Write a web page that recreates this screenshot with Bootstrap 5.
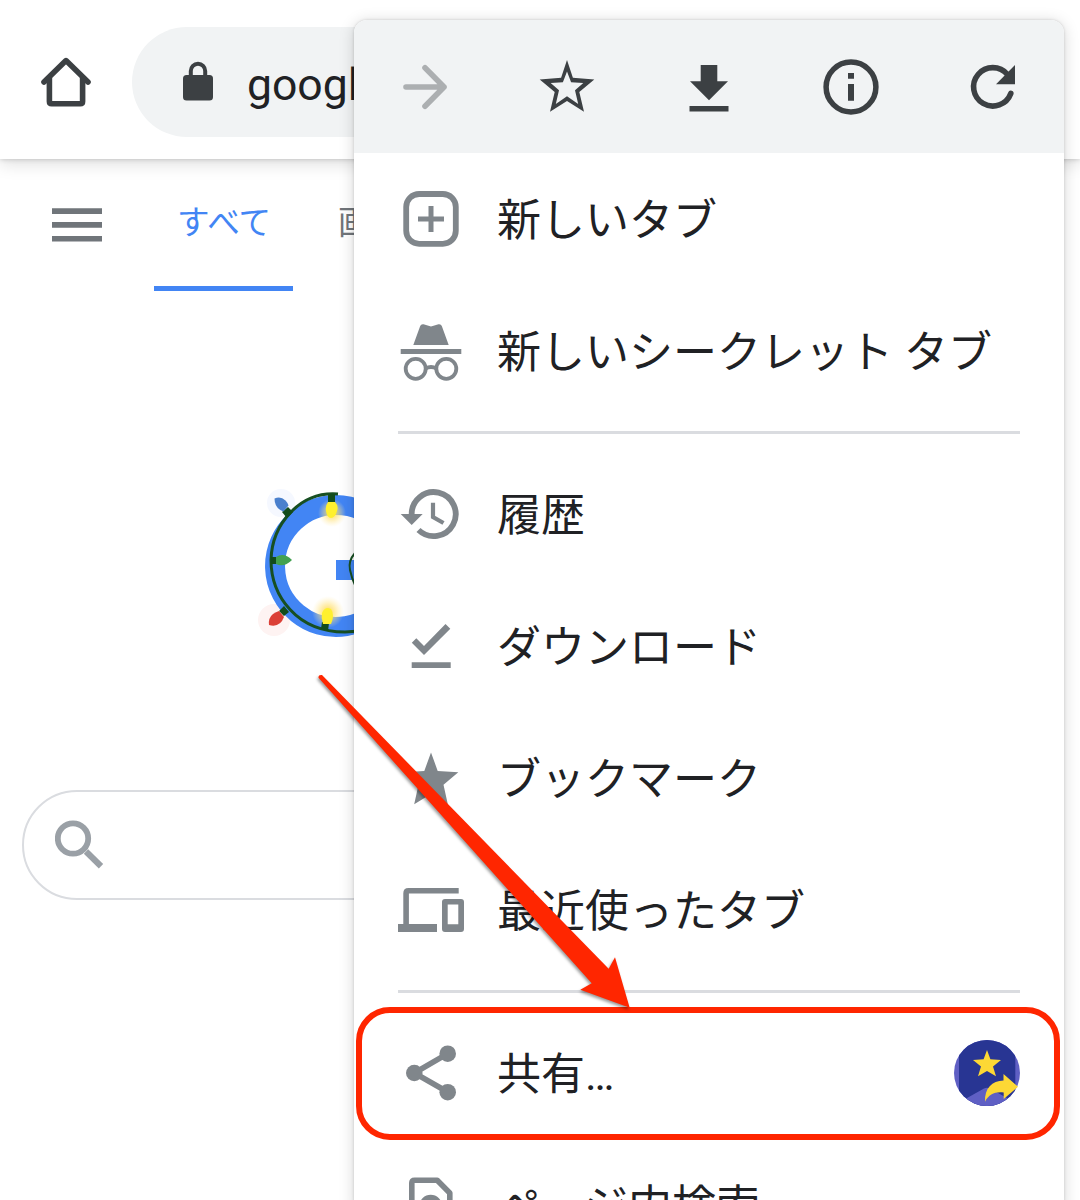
<!DOCTYPE html>
<html lang="ja">
<head>
<meta charset="utf-8">
<meta name="viewport" content="width=device-width, initial-scale=1">
<title>Google</title>
<link rel="stylesheet" href="https://cdn.jsdelivr.net/npm/bootstrap@5.3.0/dist/css/bootstrap.min.css">
<style>
  body { font-family: Roboto, "Noto Sans CJK JP", sans-serif; color: #202124; background: #fff; }
  .phone { width: 1080px; height: 1200px; }
  .toolbar { height: 159px; padding: 27px 41px 22px; box-shadow: 0 0 5px rgba(0,0,0,.2), 0 5px 16px rgba(0,0,0,.13); background: #fff; z-index: 1; }
  .home-ico { margin-top: 30px; width: 50px; height: 50px; }
  .omnibox { margin-left: 41px; width: 760px; height: 110px; padding-left: 49px; padding-bottom: 2px; background: #f1f3f4; font-size: 44.5px; line-height: 1; }
  .omnibox span { margin-left: 32px; padding-top: 8px; }
  .g-tabs { height: 132px; padding-left: 52px; }
  .g-tabs .burger { margin: 49px 52px 0 0; }
  .g-tab { font-size: 32.6px; line-height: 46px; padding: 41px 18px 0 23px; color: #70757a; border-bottom: 5px solid transparent; margin-right: 22px; }
  .g-tab.on { color: #4285f4; border-color: #4285f4; width: 139px; }
  .doodle { margin: 189px 0 0 250px; width: 180px; height: 170px; }
  .searchbox { margin: 140px 22px 0; height: 110px; border: 2px solid #dadce0; padding-left: 31px; padding-bottom: 1px; }
  .menu { left: 354px; top: 20px; width: 710px; height: 1190px; border-radius: 13px 13px 0 0; box-shadow: 0 0 3px rgba(0,0,0,.16), 0 2px 15px rgba(0,0,0,.17); z-index: 3; }
  .menu-top { height: 133px; background: #f1f3f4; color: #3c4043; border-radius: 13px 13px 0 0; }
  .entry { height: 132px; padding: 0 44px; font-size: 44px; line-height: 64px; gap: 33px; }
  .entry span { padding-top: 4px; }
  .entry svg { color: #80868b; flex: none; }
  .rule { height: 3px; margin: 14px 44px; background: #dadce0; }
  .frame { left: 356px; top: 1007px; width: 704px; height: 133px; border: 6px solid #ff2600; border-radius: 34px; z-index: 4; }
  .pointer { left: 300px; top: 660px; z-index: 5; filter: drop-shadow(-1px 2px 1.5px rgba(0,0,0,.4)); }
</style>
<script src="https://cdn.jsdelivr.net/npm/bootstrap@5.3.0/dist/js/bootstrap.bundle.min.js"></script>
</head>
<body>
<div class="phone position-relative overflow-hidden">
  <header class="toolbar d-flex position-relative">
    <svg class="home-ico" viewBox="0 0 50 50" fill="none" stroke="#3c4043" stroke-width="5.6" stroke-linejoin="round" stroke-linecap="round"><path d="M3 25 25 3.6 47 25"/><path d="M8.4 20.5V44.6Q8.4 46.8 10.6 46.8H39.4Q41.6 46.8 41.6 44.6V20.5" stroke-linecap="butt"/></svg>
    <div class="omnibox rounded-pill d-flex align-items-center">
      <svg width="34" height="42" viewBox="0 0 34 42"><path d="M9.8 18V11a7.2 7.2 0 0 1 14.4 0V18" fill="none" stroke="#3c4043" stroke-width="4"/><rect x="2" y="15" width="30" height="25.5" rx="3.5" fill="#3c4043"/></svg>
      <span>google.com</span>
    </div>
  </header>
  <main>
    <nav class="g-tabs d-flex">
      <svg class="burger" width="50" height="34" viewBox="0 0 50 34" fill="#70757a"><path d="M0 .3h50v5.6H0zM0 14.1h50v5.6H0zM0 28h50v5.6H0z"/></svg>
      <div class="g-tab on text-nowrap">すべて</div>
      <div class="g-tab text-nowrap">画像</div>
    </nav>
    <svg class="doodle d-block" viewBox="250 480 180 170">
      <defs><radialGradient id="glow"><stop offset="0" stop-color="#ffd84a"/><stop offset=".5" stop-color="#ffe27a" stop-opacity=".55"/><stop offset="1" stop-color="#ffecb0" stop-opacity="0"/></radialGradient></defs>
      <circle cx="281" cy="503" r="14" fill="#f5f8ff"/><circle cx="274" cy="620" r="16" fill="#fef3f2"/>
      <path d="M386 531A61 61 0 1 0 388 598L397 570H336" fill="none" stroke="#4285f4" stroke-width="20"/>
      <circle cx="332" cy="513" r="14" fill="url(#glow)"/><circle cx="328" cy="612" r="16" fill="url(#glow)"/>
      <path d="M338 494C300 491 272 524 271 560C271 596 297 632 345 632L360 631" fill="none" stroke="#174f22" stroke-width="3"/>
      <path d="M355 553Q348 561 350 570T355 585" fill="none" stroke="#174f22" stroke-width="2"/>
      <g fill="#124c1c"><path d="M328 494h7v9h-7zM271 557h7v7h-7zM288 507l5 5-6 6-5-6zM284 606l5 6-5 4-5-5zM322 622l7 1-1 8-7-2z"/></g>
      <path d="M328 502h7q4 4 2 9-2 7-6 7-4 0-5-7-1-5 2-9z" fill="#fff02e"/>
      <path d="M323 624h8q4-9 0-15l-3-1q-4 0-6 5-1 5 1 11z" fill="#fff02e"/>
      <path d="M276 557q8-5 16 3-8 8-16 4z" fill="#43a150"/>
      <path d="M274.500 498.500q6-3 11 2 2 2 3 5l-5 6q-9-3-9-13z" fill="#4a80cd"/>
      <path d="M269 625q-1-7 4-11 3-2 6-3l5 6q-4 11-15 8z" fill="#db4037"/>
    </svg>
    <div class="searchbox rounded-pill d-flex align-items-center">
      <svg width="50" height="50" viewBox="0 0 50 50" fill="none" stroke="#9aa0a6"><circle cx="18" cy="18.5" r="15.2" stroke-width="5.8"/><path d="M31 31.500 46 46.300" stroke-width="6.2"/></svg>
    </div>
  </main>

  <aside class="menu position-absolute bg-white overflow-visible">
    <div class="menu-top d-flex align-items-center">
      <div class="flex-fill text-center"><svg width="66" height="66" fill="none" stroke="#acafb1" stroke-width="5.6" stroke-linecap="round" stroke-linejoin="round"><path d="M14 33H52M33 13.8 52 33 33 52.2"/></svg></div>
      <div class="flex-fill text-center"><svg width="66" height="66" fill="currentColor" fill-rule="evenodd"><path d="M33 6 38.9 23.8 60.3 25.6 45.3 38 50 57.8 33 47 16 57.8 20.7 38 5.7 25.6 27.1 23.8zM33 17.5 28.9 28.3 16.7 28.9 25 36.2 21.8 50 33 42.2 44.2 50 41 36.2 49.3 28.9 37.1 28.3z"/></svg></div>
      <div class="flex-fill text-center"><svg width="66" height="66" fill="currentColor"><path d="M24.7 11H41.3V27.3H52L33 46.3 14 27.3H24.7zM13.5 52h39v5.6h-39z"/></svg></div>
      <div class="flex-fill text-center"><svg width="66" height="66" fill="currentColor"><circle cx="33" cy="33" r="24.9" fill="none" stroke="currentColor" stroke-width="5.5"/><path d="M30 19h6v5.7h-6zM30 30h6v16.7h-6z"/></svg></div>
      <div class="flex-fill text-center"><svg width="66" height="66" fill="currentColor"><path d="M50.8 39.5A19.2 19.2 0 1 1 47.5 20.5" fill="none" stroke="currentColor" stroke-width="5.6" stroke-linecap="round"/><path d="M55 11V30.3H36z"/></svg></div>
    </div>
    <div class="entry d-flex align-items-center"><svg width="66" height="66" fill="none" stroke="currentColor"><rect x="8.2" y="8" width="49.6" height="49.8" rx="13" stroke-width="5.8"/><path d="M20 33H46M33 20V46" stroke-width="5"/></svg><span>新しいタブ</span></div>
    <div class="entry d-flex align-items-center"><svg width="66" height="66" fill="currentColor"><path d="M15.3 27 22.2 8Q23 5.8 25.5 6.2L33 8.5 40.5 6.2Q43 5.8 43.8 8L50.7 27zM2.7 31h60.6v5H2.7z"/><g fill="none" stroke="currentColor" stroke-width="3.8"><circle cx="17.7" cy="50.8" r="10"/><circle cx="48.3" cy="50.8" r="10"/><path d="M27.5 50.5Q33 47.5 38.5 50.5"/></g></svg><span>新しいシークレット タブ</span></div>
    <div class="rule"></div>
    <div class="entry d-flex align-items-center"><svg width="66" height="66" fill="none" stroke="currentColor"><path d="M13.7 34A22 22 0 1 1 20.5 49" stroke-width="5.8"/><path d="M35 21.7V36L45.5 42" stroke-width="4.2"/><path d="M2.7 33h22l-11 11z" fill="currentColor" stroke="none"/></svg><span>履歴</span></div>
    <div class="entry d-flex align-items-center"><svg width="66" height="66" fill="currentColor"><path d="M13.8 29.8 18.3 25.3 26 33 47.5 11 52.3 15.8 26 41.9zM13.7 49.3h39V55h-39z"/></svg><span>ダウンロード</span></div>
    <div class="entry d-flex align-items-center"><svg width="66" height="66" fill="currentColor"><path d="M33 7.5 39.7 25.9 60.3 27.3 45.5 39.8 49.8 59.2 33 49 16.2 59.2 20.5 39.8 5.7 27.3 26.3 25.9z"/></svg><span>ブックマーク</span></div>
    <div class="entry d-flex align-items-center"><svg width="66" height="66" fill="currentColor" fill-rule="evenodd"><path d="M60.7 11H10.5Q5.3 11 5.3 16.2V47H0V55H39V47H10.9V16.5H60.7zM47 22H63Q66 22 66 25V52Q66 55 63 55H47Q44 55 44 52V25Q44 22 47 22zM49.7 27.5V47.3H60.3V27.5z"/></svg><span>最近使ったタブ</span></div>
    <div class="rule"></div>
    <div class="entry d-flex align-items-center"><svg width="66" height="66" fill="currentColor"><path d="M49.7 13.7 16.3 33 49.7 52" fill="none" stroke="currentColor" stroke-width="5.6"/><circle cx="16.3" cy="33" r="8.3"/><circle cx="49.7" cy="13.7" r="8.3"/><circle cx="49.7" cy="52.2" r="8.3"/></svg><span class="flex-grow-1">共有…</span>
      <svg width="66" height="66"><clipPath id="disc"><circle cx="33" cy="33" r="33"/></clipPath><g clip-path="url(#disc)"><path fill="#5f5fc4" d="M0 0h66v66H0z"/><path fill="#283593" d="M5 0h56.3v66H5z"/><path fill="#5f5fc4" d="M5 62.5 30 48.5Q33 46.8 36 48.5L61 62.5V66H5z"/></g><path fill="#fdd835" d="M33 10 36.4 19.2 47 20 39 26.6 42 36.3 33 31 24 36.3 27 26.6 19 20 29.6 19.2zM31 61.7C30.5 48 38 41 49.5 40.5V34L64 46.7 49.7 59V52.5C41 51.5 35 54 31 61.7z"/></svg></div>
    <div class="entry d-flex align-items-center"><svg width="66" height="66" fill="none" stroke="currentColor" stroke-width="5.6"><path d="M13.8 60V11Q13.8 8.2 16.6 8.2H39.2L51.8 21V60" stroke-linejoin="round"/><circle cx="32.7" cy="34" r="8.5"/></svg><span>ページ内検索</span></div>
  </aside>

  <div class="frame position-absolute"></div>
  <svg class="pointer position-absolute" width="350" height="360" viewBox="300 660 350 360"><path fill="#ff2600" d="M318.500 677.800Q318 674.500 322 675L608.700 968.700 615 957.300 629.700 1007.700 580.300 989.700 591.700 983.300z"/></svg>
</div>
</body>
</html>
